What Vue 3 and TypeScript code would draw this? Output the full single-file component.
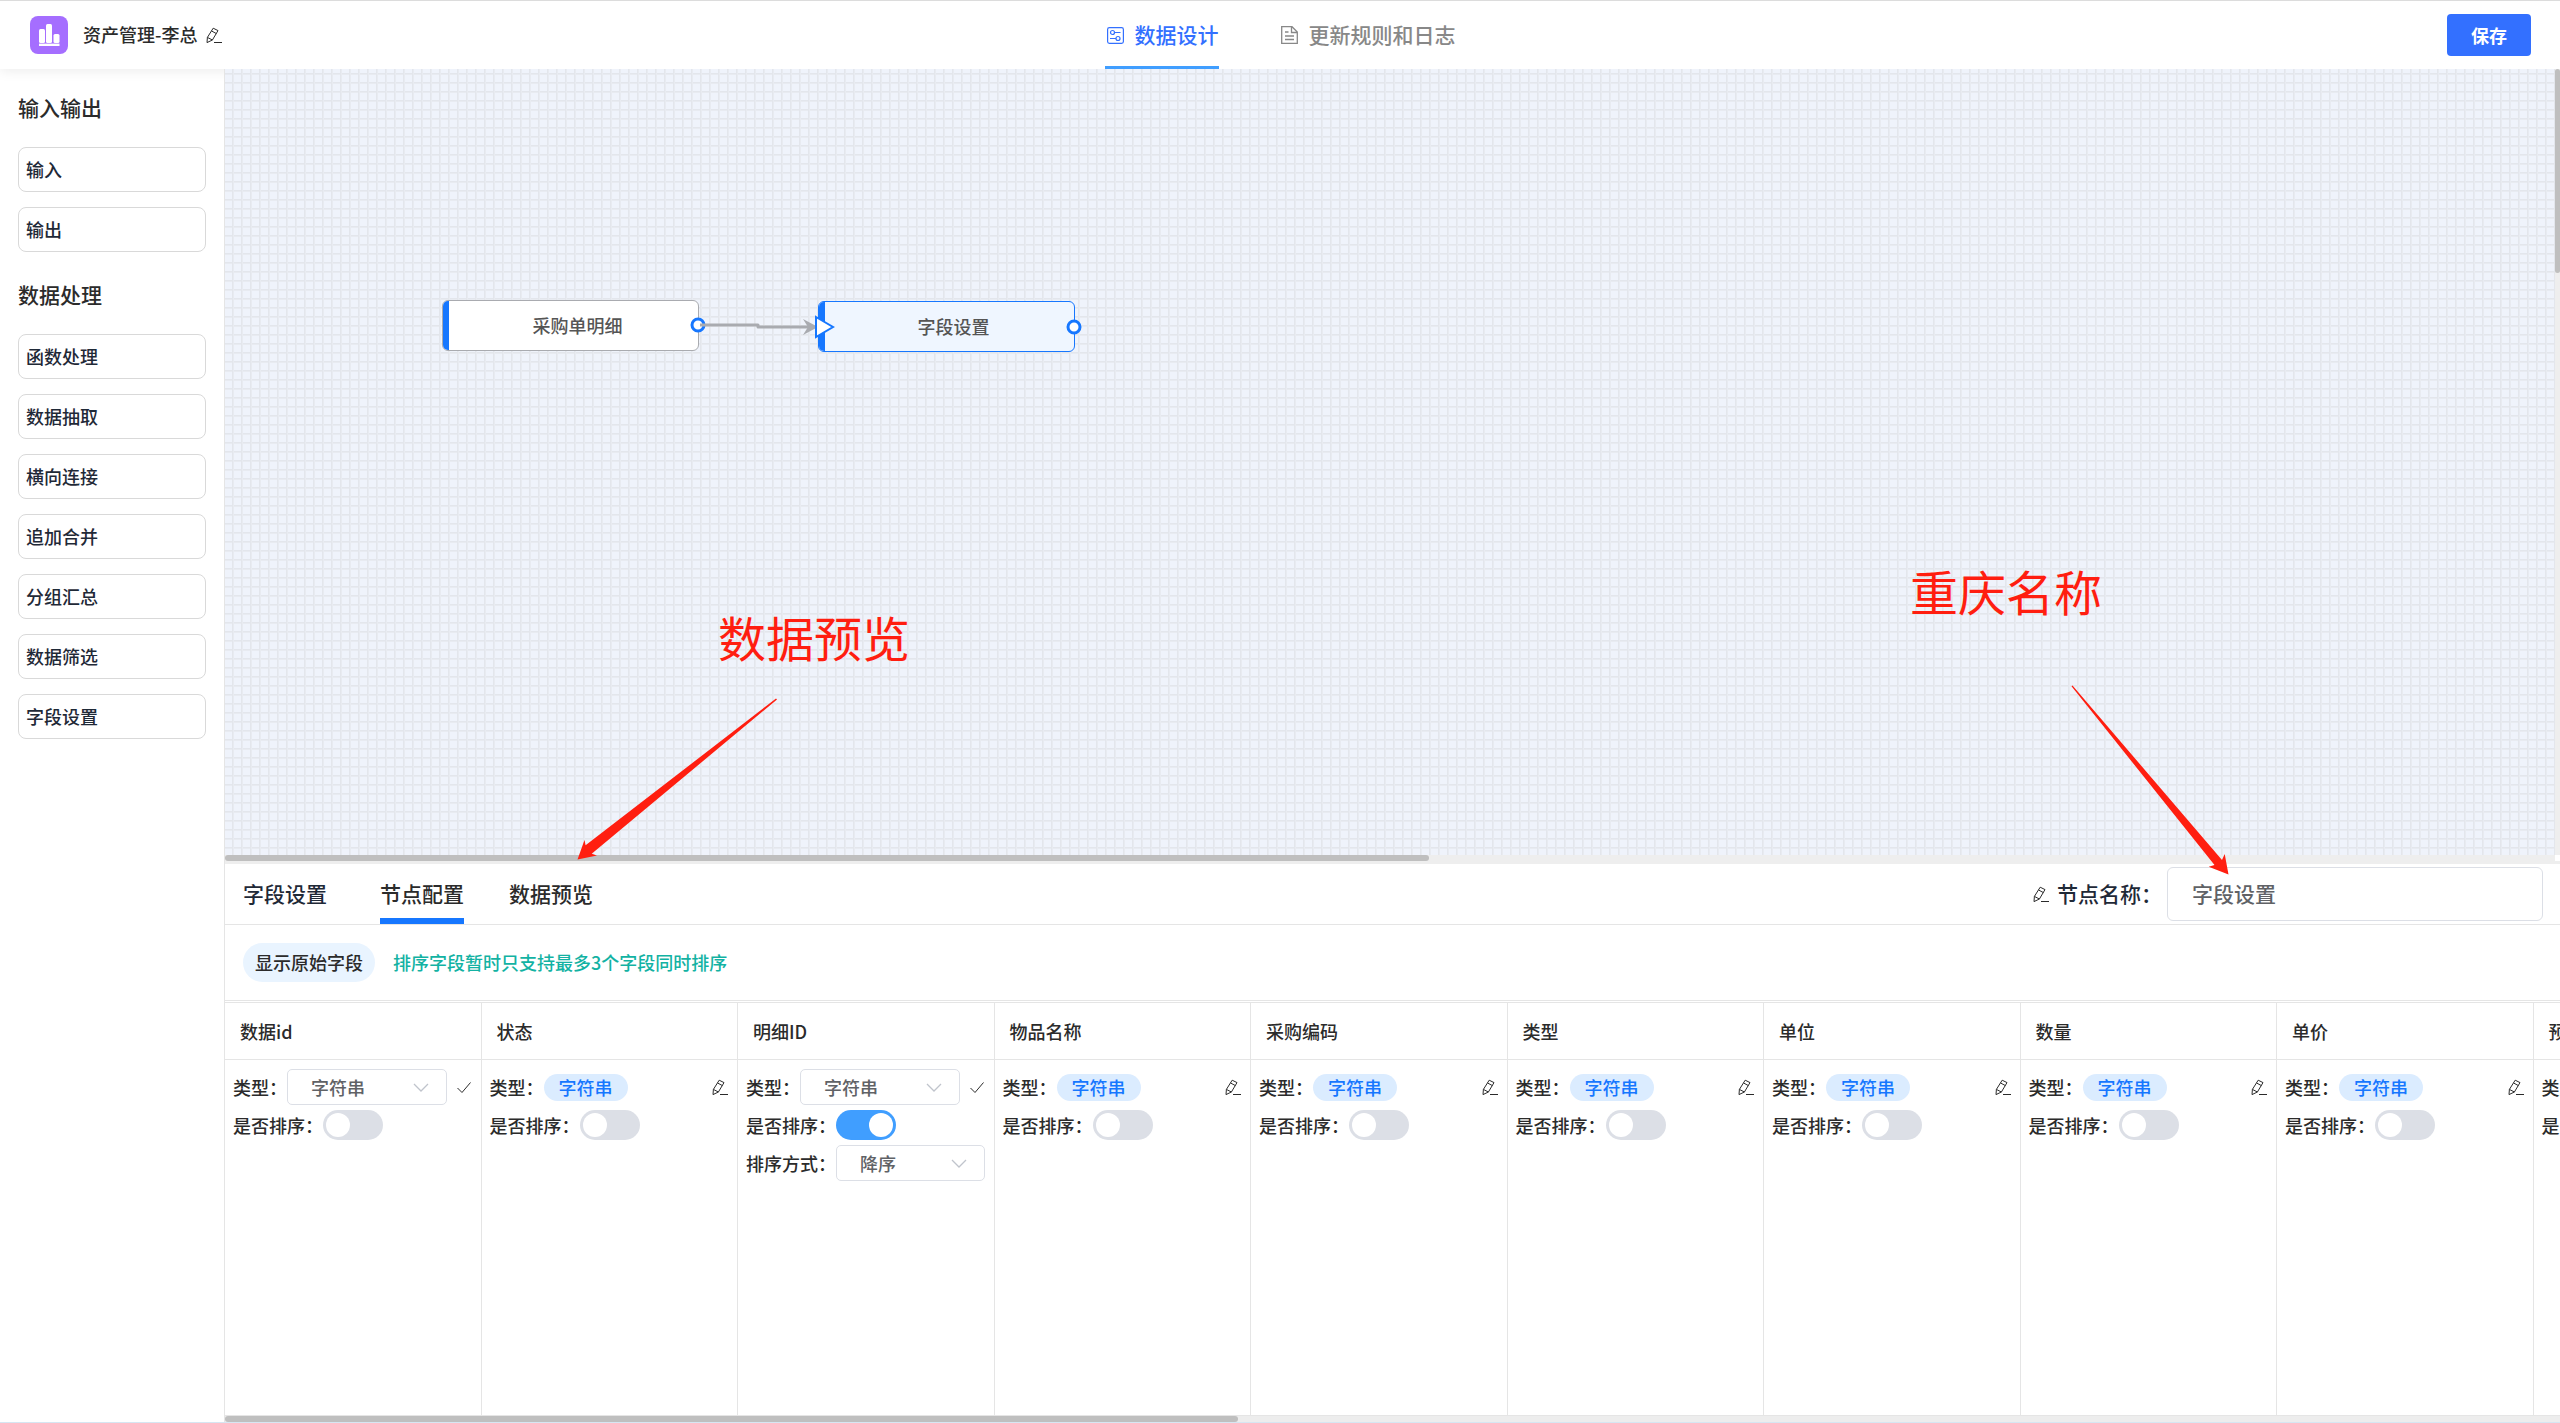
<script setup lang="ts">
import { ref } from 'vue'

interface Field {
  name: string
  editing: boolean
  sorted: boolean
}

const ioItems = ['输入', '输出']
const processItems = ['函数处理', '数据抽取', '横向连接', '追加合并', '分组汇总', '数据筛选', '字段设置']
const nodeName = ref('字段设置')

const fields = ref<Field[]>([
  { name: '数据id', editing: true, sorted: false },
  { name: '状态', editing: false, sorted: false },
  { name: '明细ID', editing: true, sorted: true },
  { name: '物品名称', editing: false, sorted: false },
  { name: '采购编码', editing: false, sorted: false },
  { name: '类型', editing: false, sorted: false },
  { name: '单位', editing: false, sorted: false },
  { name: '数量', editing: false, sorted: false },
  { name: '单价', editing: false, sorted: false },
  { name: '预算', editing: false, sorted: false },
])
</script>

<template>
  <div class="page">
    <svg class="defs" width="0" height="0" aria-hidden="true">
      <symbol id="pencil" viewBox="0 0 16 17">
        <path d="M7.2 1.2 12 3.6 6.4 13 1 15.6 1.4 10.4Z M5.6 4 10.4 6.6 M1.4 10.4 6.4 13 M8 15.5H16" fill="none" stroke="currentColor" stroke-width="1" stroke-linejoin="round" />
      </symbol>
    </svg>

    <header class="header">
      <div class="brand">
        <svg class="logo" viewBox="0 0 38 38" aria-hidden="true">
          <rect width="38" height="38" rx="8" fill="#a56eff" />
          <rect x="9" y="13" width="6" height="14" rx="1.5" fill="#fff" />
          <rect x="16" y="8" width="6" height="19" rx="1.5" fill="#fff" />
          <rect x="23.5" y="18" width="6" height="9" rx="1.5" fill="#fff" />
          <rect x="9" y="27" width="20.5" height="1" fill="#c9a8ff" />
          <rect x="9" y="28" width="20.5" height="2" fill="#fff" />
        </svg>
        <span class="title">资产管理-李总</span>
        <button class="icon-btn" type="button" aria-label="编辑"><svg class="pencil"><use href="#pencil" /></svg></button>
      </div>
      <nav class="nav">
        <a class="nav-tab active" href="#design">
          <svg viewBox="0 0 20 20" width="20" height="20" fill="none" stroke="currentColor" stroke-width="1.2" aria-hidden="true">
            <rect x="2.6" y="2.6" width="15.8" height="15.8" rx="1.8" />
            <circle cx="7.5" cy="7.5" r="2" />
            <path d="M9.5 7.5H15.500M5 13.500H11" />
            <circle cx="13" cy="13.5" r="2" />
          </svg>
          <span>数据设计</span>
        </a>
        <a class="nav-tab" href="#log">
          <svg viewBox="0 0 20 20" width="20" height="20" fill="none" stroke="currentColor" stroke-width="1.3" aria-hidden="true">
            <path d="M2.7 1.7H13L18.3 7V18.3H2.7Z M12.5 1.7V7.500H18.3 M6 7H9.5 M6 11H15 M6 14.5H15" />
          </svg>
          <span>更新规则和日志</span>
        </a>
      </nav>
      <div class="actions"><button class="save" type="button">保存</button></div>
    </header>

    <div class="body">
      <aside class="sidebar">
        <h2>输入输出</h2>
        <ul>
          <li v-for="item in ioItems" :key="item"><button type="button">{{ item }}</button></li>
        </ul>
        <h2>数据处理</h2>
        <ul>
          <li v-for="item in processItems" :key="item"><button type="button">{{ item }}</button></li>
        </ul>
      </aside>

      <main class="main">
        <section class="canvas-wrap">
          <div class="canvas-row">
            <div class="canvas">
              <div class="node source"><span>采购单明细</span></div>
              <div class="node target"><span>字段设置</span></div>
              <svg class="edges" width="860" height="60" viewBox="0 0 860 60" fill="none" aria-hidden="true">
                <circle cx="473" cy="26" r="6" fill="#fff" stroke="#1677ff" stroke-width="3" />
                <path d="M475 26H533V28H588" stroke="#a9abb0" stroke-width="3" stroke-linejoin="round" />
                <path d="M578 20 593 28 578 36 583 28Z" fill="#a9abb0" />
                <path d="M591 18 608 28 591 38Z" fill="#fff" stroke="#1677ff" stroke-width="2" />
                <circle cx="849" cy="28" r="6" fill="#fff" stroke="#1677ff" stroke-width="3" />
              </svg>
            </div>
            <div class="vbar"><div class="vthumb"></div></div>
          </div>
          <div class="hbar"><div class="hthumb"></div></div>
          <div class="splitter"></div>
        </section>

        <section class="panel">
          <div class="panel-head">
            <span class="panel-title">字段设置</span>
            <nav class="panel-tabs">
              <a class="active" href="#config">节点配置</a>
              <a href="#preview">数据预览</a>
            </nav>
            <svg class="pencil"><use href="#pencil" /></svg>
            <label for="node-name">节点名称：</label>
            <input id="node-name" v-model="nodeName" type="text" />
          </div>
          <div class="toolbar">
            <button class="origin" type="button">显示原始字段</button>
            <p>排序字段暂时只支持最多3个字段同时排序</p>
          </div>
          <div class="table-wrap">
            <table>
              <thead>
                <tr><th v-for="f in fields" :key="f.name" scope="col">{{ f.name }}</th></tr>
              </thead>
              <tbody>
                <tr>
                  <td v-for="(f, i) in fields" :key="f.name">
                    <div class="row">
                      <label :for="f.editing ? 'type-' + i : undefined">类型：</label>
                      <template v-if="f.editing">
                        <span class="select">
                          <select :id="'type-' + i"><option>字符串</option></select>
                          <svg viewBox="0 0 16 9"><path d="M1 1 8 8 15 1" /></svg>
                        </span>
                        <button class="icon-btn end" type="button" aria-label="确定">
                          <svg class="pencil" viewBox="0 0 16 16"><path d="M1.5 8.5 6 13 14.5 3" fill="none" stroke="currentColor" stroke-width="1" /></svg>
                        </button>
                      </template>
                      <template v-else>
                        <span class="tag">字符串</span>
                        <button class="icon-btn end" type="button" aria-label="编辑"><svg class="pencil"><use href="#pencil" /></svg></button>
                      </template>
                    </div>
                    <div class="row">
                      <label :for="'sort-' + i">是否排序：</label>
                      <input :id="'sort-' + i" v-model="f.sorted" class="switch" type="checkbox" />
                    </div>
                    <div v-if="f.sorted" class="row">
                      <label :for="'order-' + i">排序方式：</label>
                      <span class="select order">
                        <select :id="'order-' + i"><option>降序</option></select>
                        <svg viewBox="0 0 16 9"><path d="M1 1 8 8 15 1" /></svg>
                      </span>
                    </div>
                  </td>
                </tr>
              </tbody>
            </table>
          </div>
          <div class="tbar"><div class="tthumb"></div></div>
        </section>
      </main>
    </div>

    <div class="note note-preview">数据预览</div>
    <div class="note note-name">重庆名称</div>
    <svg class="arrows" width="2560" height="900" viewBox="0 0 2560 900" fill="#ff1e10" aria-hidden="true">
      <path d="M776 698.5 777 699.5 591.7 853.7 597 855.5 577.5 859.5 584.5 840 585.6 845.3Z" />
      <path d="M2071.5 686.3 2072.5 685.5 2222 860 2224.7 854 2228.5 874.5 2208.7 866.7 2214.5 865Z" />
    </svg>
  </div>
</template>

<style>
body {
  margin: 0;
}
</style>

<style scoped>
* {
  box-sizing: border-box;
}
.page {
  position: relative;
  display: flex;
  flex-direction: column;
  height: 100vh;
  overflow: hidden;
  border-top: 1px solid #dcdcdc;
  border-bottom: 1px solid #d6e6f2;
  background: #fff;
  color: #2b2b2b;
  font: 500 18px/27px "Noto Sans CJK SC", sans-serif;
}
.defs {
  position: absolute;
}
button,
input,
select {
  margin: 0;
  font: inherit;
  color: inherit;
}
a {
  color: inherit;
  text-decoration: none;
}
.pencil {
  display: block;
  width: 16px;
  height: 17px;
  flex: none;
}
.icon-btn {
  padding: 0;
  border: 0;
  background: none;
}
.header {
  display: grid;
  grid-template-columns: 1fr auto 1fr;
  flex: none;
  height: 68px;
  box-shadow: 0 2px 12px rgba(0, 0, 0, 0.08);
}
.brand {
  display: flex;
  align-items: center;
  padding-left: 30px;
}
.logo {
  width: 38px;
  height: 38px;
  margin-right: 15px;
}
.title {
  margin-right: 9px;
  padding-bottom: 2px;
}
.nav {
  display: flex;
  gap: 60px;
}
.nav-tab {
  display: flex;
  align-items: center;
  gap: 10px;
  border-top: 3px solid transparent;
  border-bottom: 3px solid transparent;
  color: #888;
  font-size: 21px;
}
.nav-tab span {
  padding-bottom: 2px;
}
.nav-tab.active {
  border-bottom-color: #409eff;
  color: #3370ff;
}
.actions {
  display: flex;
  align-items: center;
  justify-content: flex-end;
  padding-right: 29px;
}
.save {
  width: 84px;
  height: 42px;
  border: 0;
  border-radius: 4px;
  background: #3370ff;
  color: #fff;
  font-weight: 700;
}
.body {
  display: flex;
  flex: 1;
  min-height: 0;
}
.sidebar {
  flex: none;
  width: 225px;
  padding: 22px 18px 0;
  border-right: 1px solid #e5e5e5;
}
.sidebar h2 {
  margin: 0 0 24px;
  font-size: 21px;
  font-weight: 500;
  line-height: 32px;
}
.sidebar ul {
  display: flex;
  flex-direction: column;
  gap: 15px;
  margin: 0 0 26px;
  padding: 0;
  list-style: none;
}
.sidebar li button {
  display: block;
  width: 188px;
  height: 45px;
  padding: 0 7px;
  border: 1px solid #d9d9d9;
  border-radius: 8px;
  background: #fff;
  color: #1f2937;
  text-align: left;
}
.main {
  position: relative;
  display: flex;
  flex: 1;
  flex-direction: column;
  min-width: 0;
}
.canvas-wrap {
  display: flex;
  flex: 1;
  flex-direction: column;
  min-height: 0;
}
.canvas-row {
  display: flex;
  flex: 1;
  min-height: 0;
}
.canvas {
  position: relative;
  flex: 1;
  background-color: #eff3fb;
  background-image: linear-gradient(90deg, #e3e6ec 1px, #e8ebf1 1px, #e8ebf1 2px, transparent 2px),
    linear-gradient(#e3e6ec 1px, #e8ebf1 1px, #e8ebf1 2px, transparent 2px);
  background-size: 9px 9px;
  background-position: 7px 4px;
}
.vbar {
  width: 5px;
  background: #eee;
}
.vthumb {
  height: 26%;
  border-radius: 3px;
  background: #bfbfbf;
}
.hbar {
  flex: none;
  height: 6px;
  margin-right: 5px;
  background: #eee;
}
.hthumb {
  width: 1204px;
  height: 6px;
  border-radius: 3px;
  background: #bfbfbf;
}
.splitter {
  flex: none;
  height: 3px;
  background: #eee;
}
.node {
  position: absolute;
  display: flex;
  align-items: center;
  justify-content: center;
  width: 257px;
  height: 51px;
  padding-left: 14px;
  border: 1px solid #a9abb0;
  border-radius: 6px;
  background: #fff;
  color: #555;
}
.node::before {
  position: absolute;
  top: 0;
  bottom: 0;
  left: 0;
  width: 6px;
  border-radius: 5px 0 0 5px;
  background: #1677ff;
  content: "";
}
.source {
  top: 231px;
  left: 217px;
}
.target {
  top: 232px;
  left: 593px;
  border-color: #1677ff;
  background: #eff6ff;
}
.edges {
  position: absolute;
  top: 230px;
  left: 0;
}
.panel {
  display: flex;
  flex: none;
  flex-direction: column;
  height: 558px;
}
.panel-head {
  display: flex;
  align-items: center;
  flex: none;
  height: 61px;
  padding: 0 17px 0 18px;
  border-bottom: 1px solid #e5e5e5;
  font-size: 21px;
}
.panel-title {
  margin-right: 53px;
  padding-bottom: 2px;
  color: #1f2937;
}
.panel-tabs {
  display: flex;
  flex: 1;
  gap: 45px;
}
.panel-tabs a {
  height: 60px;
  border-bottom: 6px solid transparent;
  line-height: 58px;
}
.panel-tabs a.active {
  border-color: #1677ff;
}
.panel-head label {
  margin: 0 5px 0 8px;
  padding-bottom: 2px;
  color: #1f2937;
}
.panel-head input {
  width: 376px;
  height: 54px;
  padding: 0 24px 2px;
  border: 1px solid #dcdfe6;
  border-radius: 6px;
  background: #fff;
  color: #606266;
}
.toolbar {
  display: flex;
  align-items: center;
  flex: none;
  gap: 18px;
  height: 76px;
  padding-left: 18px;
  border-bottom: 1px solid #e5e5e5;
}
.origin {
  width: 132px;
  height: 39px;
  padding: 0;
  border: 0;
  border-radius: 20px;
  background: #e9f4ff;
}
.toolbar p {
  margin: 0;
  color: #13b2a3;
}
.table-wrap {
  flex: 1;
  min-height: 0;
  margin-top: 1px;
  overflow: hidden;
  border-top: 1px solid #e5e5e5;
  border-bottom: 1px solid #e5e5e5;
}
table {
  width: 2565px;
  height: 100%;
  border-spacing: 0;
  table-layout: fixed;
}
th {
  height: 57px;
  padding: 0 15px;
  border-right: 1px solid #e5e5e5;
  border-bottom: 1px solid #e5e5e5;
  font-weight: 500;
  text-align: left;
}
td {
  padding: 8px 9px 8px 8px;
  border-right: 1px solid #e5e5e5;
  vertical-align: top;
}
.row {
  display: flex;
  align-items: center;
  height: 38px;
}
.row label {
  flex: none;
}
.end {
  margin-left: auto;
}
.tag {
  padding: 0 15px;
  border-radius: 14px;
  background: #dbecff;
  color: #1677ff;
}
.select {
  position: relative;
  width: 160px;
  height: 36px;
}
.select.order {
  width: 150px;
}
.select select {
  width: 100%;
  height: 36px;
  padding: 0 23px;
  border: 1px solid #dcdfe6;
  border-radius: 5px;
  appearance: none;
  background: #fff;
  color: #606266;
}
.select svg {
  position: absolute;
  top: 14px;
  right: 18px;
  width: 16px;
  height: 9px;
  fill: none;
  stroke: #c0c4cc;
  stroke-width: 1.3;
  pointer-events: none;
}
.switch {
  display: flex;
  align-items: center;
  width: 56px;
  height: 30px;
  width: 60px;
  padding: 3px;
  border-radius: 15px;
  appearance: none;
  background: #dcdfe6;
}
.switch::before {
  width: 24px;
  height: 24px;
  border-radius: 50%;
  background: #fff;
  content: "";
}
.switch:checked {
  justify-content: flex-end;
  background: #409eff;
}
.tbar {
  flex: none;
  height: 6px;
  background: #ededed;
}
.tthumb {
  width: 1013px;
  height: 6px;
  border-radius: 3px;
  background: #bfbfbf;
}
.note {
  position: absolute;
  color: #ff1e10;
  font-size: 48px;
  font-weight: 400;
  line-height: 60px;
}
.note-preview {
  top: 605px;
  left: 718px;
}
.note-name {
  top: 559px;
  left: 1910px;
}
.arrows {
  position: absolute;
  top: -1px;
  left: 0;
  pointer-events: none;
}
</style>
